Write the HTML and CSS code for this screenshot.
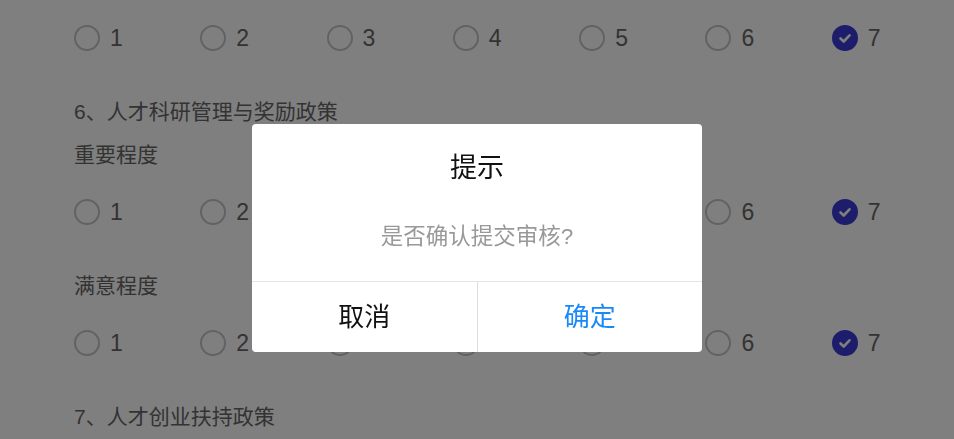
FILE: index.html
```html
<!DOCTYPE html>
<html lang="zh-CN">
<head>
    <meta charset="UTF-8">
    <meta name="viewport" content="width=device-width, initial-scale=1.0">
    <title>问卷</title>
    <link rel="stylesheet" href="styles.css">
</head>
<body>

<div class="page">
    <div class="options">
        <div class="opt"><span class="radio"></span>1</div>
        <div class="opt"><span class="radio"></span>2</div>
        <div class="opt"><span class="radio"></span>3</div>
        <div class="opt"><span class="radio"></span>4</div>
        <div class="opt"><span class="radio"></span>5</div>
        <div class="opt"><span class="radio"></span>6</div>
        <div class="opt"><span class="radio checked"><svg viewBox="0 0 26 26"><path d="M8.5 13.5l3.2 3 5.8-6.2" fill="none" stroke="#fff" stroke-width="2.6" stroke-linecap="round" stroke-linejoin="round"/></svg></span>7</div>
    </div>

    <div class="q-title">6、人才科研管理与奖励政策</div>
    <div class="sub">重要程度</div>
    <div class="options">
        <div class="opt"><span class="radio"></span>1</div>
        <div class="opt"><span class="radio"></span>2</div>
        <div class="opt"><span class="radio"></span>3</div>
        <div class="opt"><span class="radio"></span>4</div>
        <div class="opt"><span class="radio"></span>5</div>
        <div class="opt"><span class="radio"></span>6</div>
        <div class="opt"><span class="radio checked"><svg viewBox="0 0 26 26"><path d="M8.5 13.5l3.2 3 5.8-6.2" fill="none" stroke="#fff" stroke-width="2.6" stroke-linecap="round" stroke-linejoin="round"/></svg></span>7</div>
    </div>
    <div class="sub">满意程度</div>
    <div class="options">
        <div class="opt"><span class="radio"></span>1</div>
        <div class="opt"><span class="radio"></span>2</div>
        <div class="opt"><span class="radio"></span>3</div>
        <div class="opt"><span class="radio"></span>4</div>
        <div class="opt"><span class="radio"></span>5</div>
        <div class="opt"><span class="radio"></span>6</div>
        <div class="opt"><span class="radio checked"><svg viewBox="0 0 26 26"><path d="M8.5 13.5l3.2 3 5.8-6.2" fill="none" stroke="#fff" stroke-width="2.6" stroke-linecap="round" stroke-linejoin="round"/></svg></span>7</div>
    </div>

    <div class="q-title">7、人才创业扶持政策</div>
</div>

<div class="overlay"></div>
<div class="dialog">
    <div class="dialog-title">提示</div>
    <div class="dialog-msg">是否确认提交审核?</div>
    <div class="dialog-footer">
        <div class="btn cancel">取消</div>
        <div class="btn confirm">确定</div>
    </div>
</div>

</body>
</html>
```

FILE: styles.css
```css
body {
    margin: 0;
    background: #fff;
    font-family: "Liberation Sans", "Noto Sans CJK SC", sans-serif;
    color: #666;
    overflow: hidden;
}
.page {
    padding: 11px 0 0 74px;
}
.q-title, .sub {
    font-size: 21px;
    line-height: 43px;
    white-space: nowrap;
}
.options {
    display: grid;
    grid-template-columns: repeat(7, 1fr);
    margin: 9px 0 25px -4px;
    height: 54px;
}
.page > .options:first-child {
    margin-top: 0;
}
.opt {
    display: flex;
    align-items: center;
    padding-left: 4px;
    font-size: 23px;
    color: #666;
}
.radio {
    width: 26px;
    height: 26px;
    box-sizing: border-box;
    border: 2px solid #c4c5c8;
    border-radius: 50%;
    margin-right: 10px;
    display: flex;
}
.radio.checked {
    background: #3a3ad8;
    border-color: #3a3ad8;
}
.radio svg {
    margin: -2px;
    width: 26px;
    height: 26px;
}

/* dialog */
.overlay {
    position: fixed;
    inset: 0;
    background: rgba(0, 0, 0, 0.5);
}
.dialog {
    position: fixed;
    top: 124px;
    left: 50%;
    transform: translateX(-50%);
    width: 450px;
    background: #fff;
    border-radius: 4px;
    overflow: hidden;
    text-align: center;
}
.dialog-title {
    padding-top: 26px;
    font-size: 27px;
    line-height: 36px;
    color: #111;
}
.dialog-msg {
    margin-top: 36px;
    padding-bottom: 29px;
    font-size: 22.5px;
    line-height: 30px;
    color: #999;
}
.dialog-footer {
    display: flex;
    border-top: 1px solid #e5e5e5;
}
.btn {
    flex: 1;
    height: 70px;
    line-height: 70px;
    font-size: 26px;
}
.cancel {
    color: #111;
    border-right: 1px solid #ddd;
}
.confirm {
    color: #1989fa;
}
```
